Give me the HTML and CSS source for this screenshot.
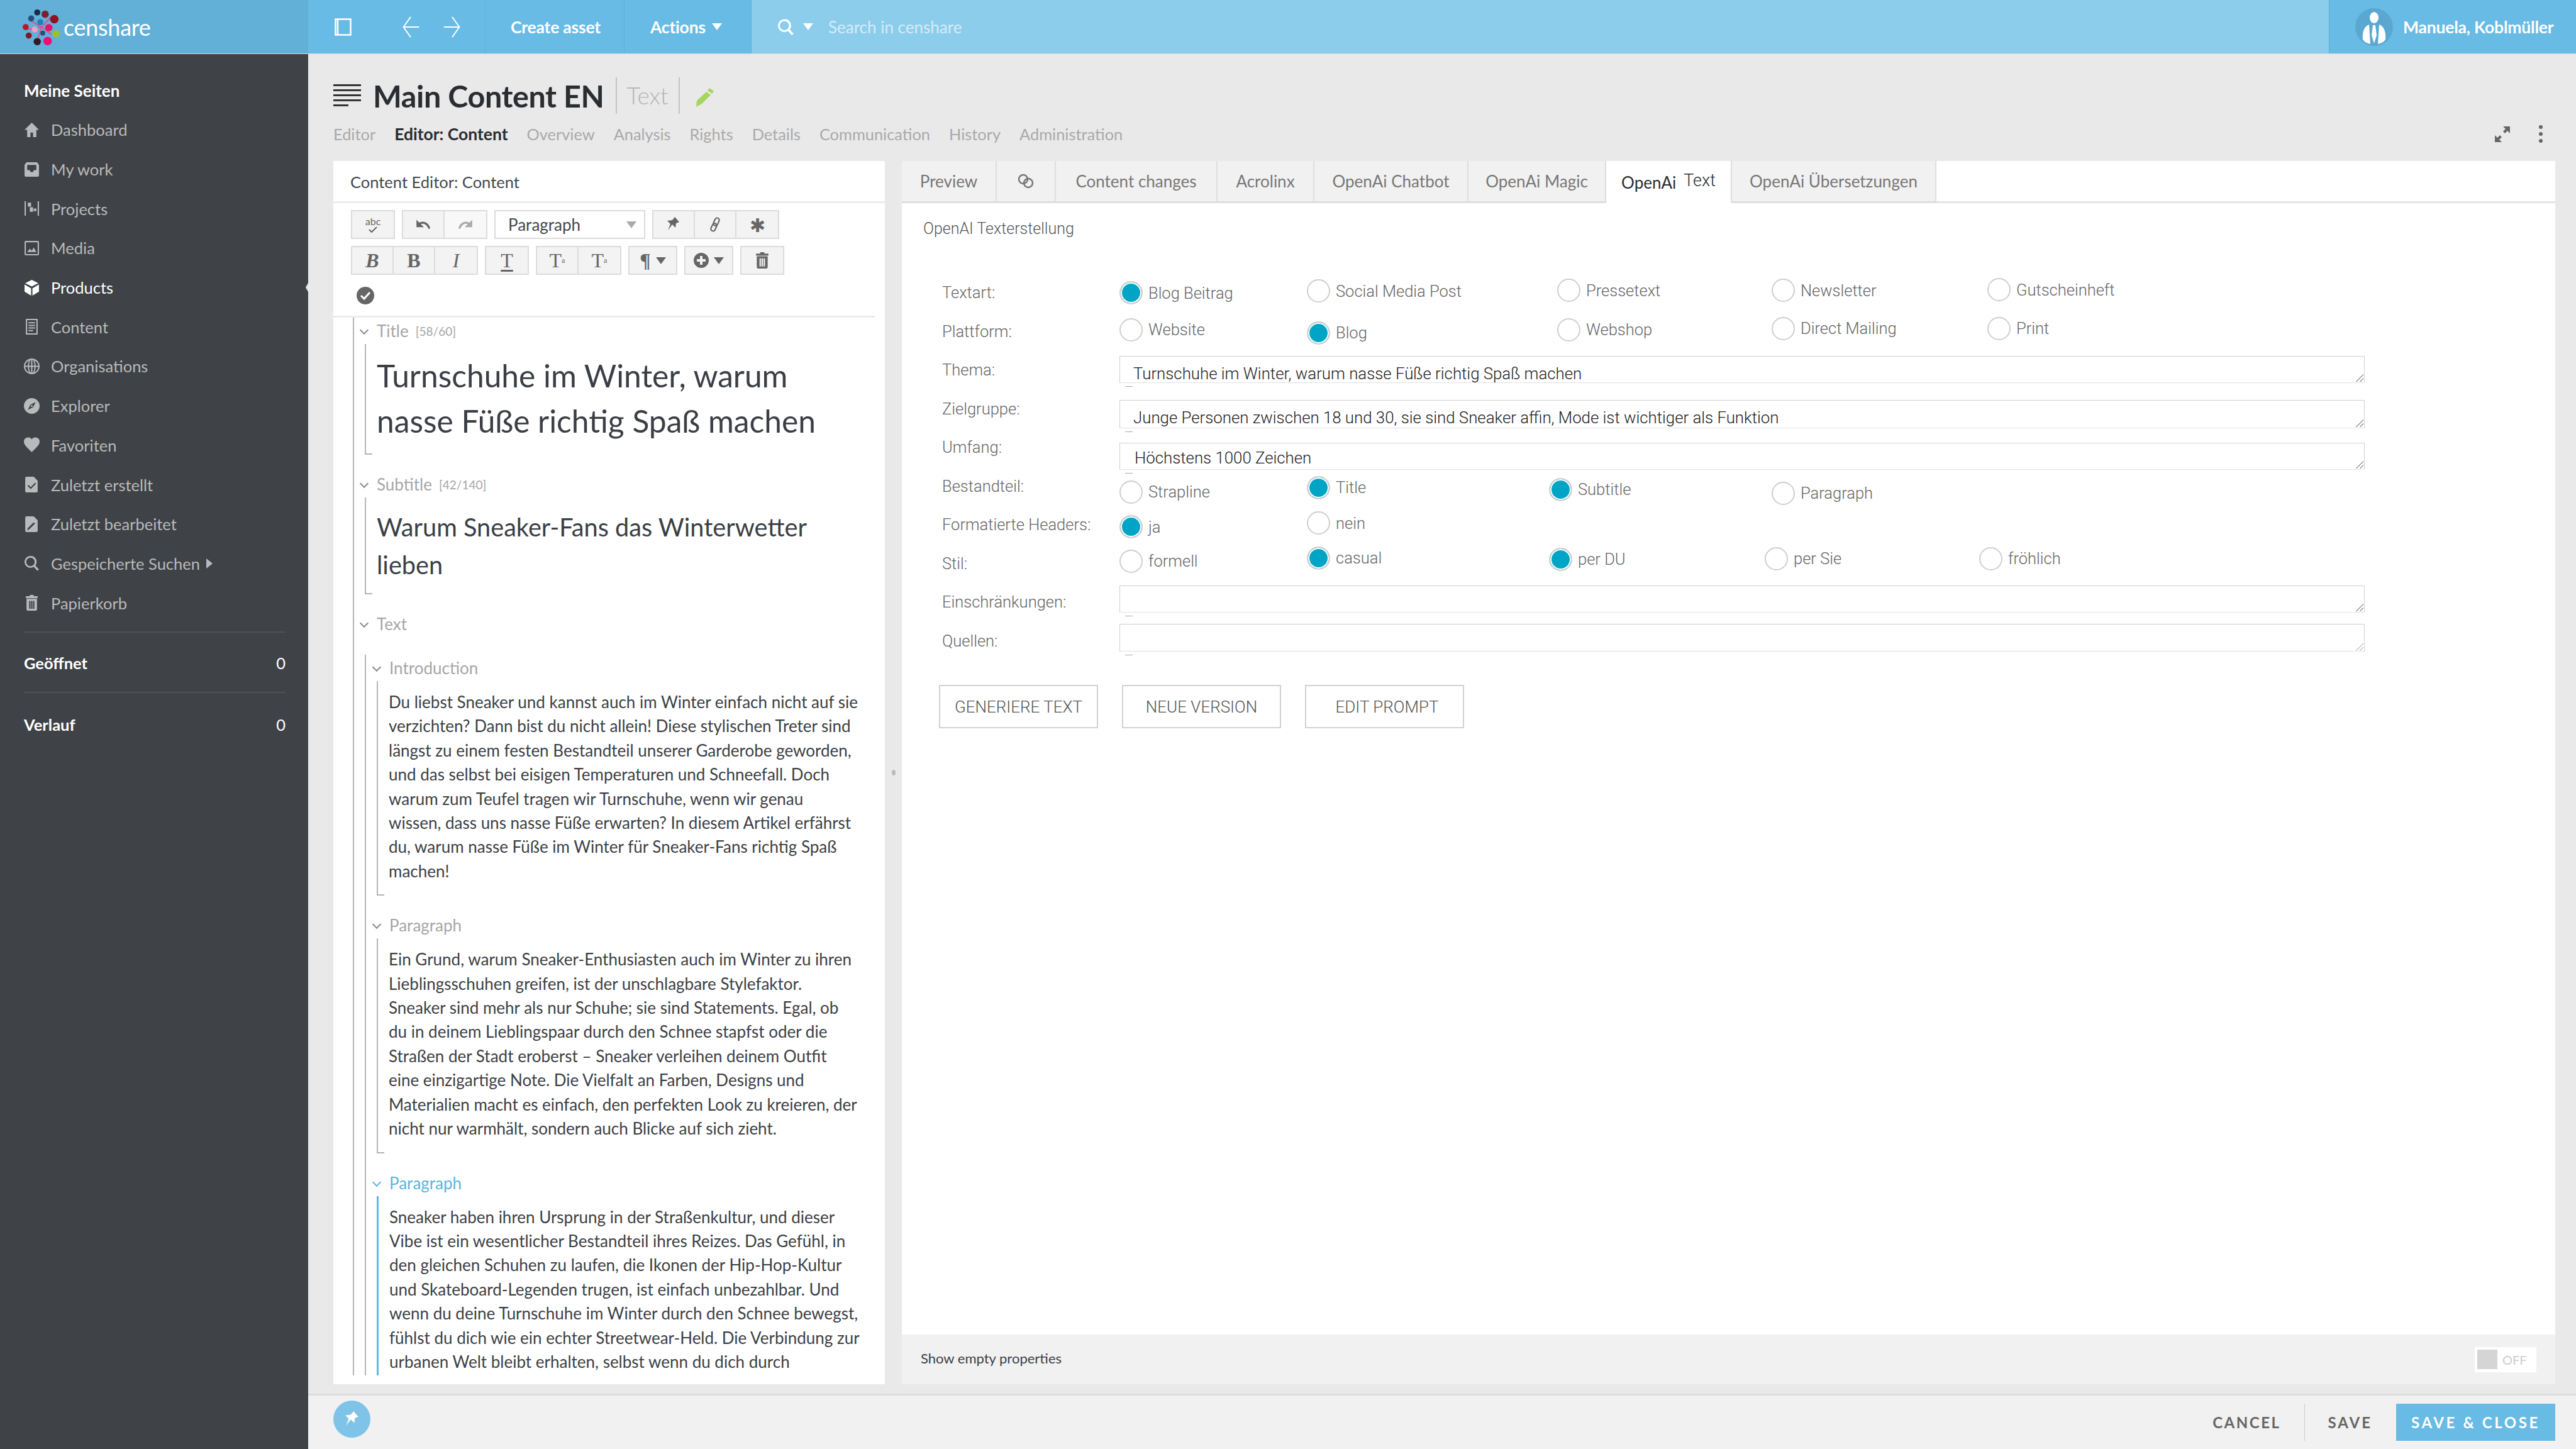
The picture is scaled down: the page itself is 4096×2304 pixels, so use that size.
FILE: index.html
```html
<!DOCTYPE html>
<html lang="en">
<head>
  <meta charset="UTF-8">
  <title>censhare | Main Content EN</title>
  <link rel="stylesheet" href="styles.css">
</head>
<body>
  <svg class="sprites" xmlns="http://www.w3.org/2000/svg">
    <symbol id="i-home" viewBox="0 0 24 24"><path d="M12 1 1 12h4v11h5v-7h4v7h5V12h4z"/></symbol>
    <symbol id="i-inbox" viewBox="0 0 24 24"><path d="M4 1h16l3 4v16a2 2 0 0 1-2 2H3a2 2 0 0 1-2-2V5zm1 4v8h4a3 3 0 0 0 6 0h4V5z" fill-rule="evenodd"/></symbol>
    <symbol id="i-projects" viewBox="0 0 24 24"><path d="M1 1h2v22H1zm20 0h2v22h-2zM6 3h5v6H6zm3 7h5v7H9zm6 2h4v4h-4z"/></symbol>
    <symbol id="i-media" viewBox="0 0 24 24"><path d="M3 1h18a2 2 0 0 1 2 2v18a2 2 0 0 1-2 2H3a2 2 0 0 1-2-2V3a2 2 0 0 1 2-2zm0 2v18h18V3zm2 15 4-5 3 3 3-5 4 7z" fill-rule="evenodd"/></symbol>
    <symbol id="i-cube" viewBox="0 0 24 24"><path d="M12 0 2 5l10 5 10-5zM1 7v11l10 6V13zm22 0-10 6v11l10-6z"/></symbol>
    <symbol id="i-doc" viewBox="0 0 24 24"><path d="M3 0h18v24H3zm2 2v20h14V2zm2 3h10v2H7zm0 4h10v2H7zm0 4h10v2H7zm0 4h7v2H7z" fill-rule="evenodd"/></symbol>
    <symbol id="i-globe" viewBox="0 0 24 24"><path d="M12 0a12 12 0 1 0 0 24 12 12 0 0 0 0-24zM2 11h4c0-3 1-6 2-8a10 10 0 0 0-6 8zm6 0h3V2c-2 1-3 5-3 9zm5 0h3c0-4-1-8-3-9zm5 0h4a10 10 0 0 0-6-8c1 2 2 5 2 8zM2 13a10 10 0 0 0 6 8c-1-2-2-5-2-8zm6 0c0 4 1 8 3 9v-9zm5 0v9c2-1 3-5 3-9zm5 0c0 3-1 6-2 8a10 10 0 0 0 6-8z" fill-rule="evenodd"/></symbol>
    <symbol id="i-compass" viewBox="0 0 24 24"><path d="M12 0a12 12 0 1 0 0 24 12 12 0 0 0 0-24zm6 6-4 8-8 4 4-8zm-6 4.500a1.500 1.500 0 1 0 0 3 1.500 1.500 0 0 0 0-3z" fill-rule="evenodd"/></symbol>
    <symbol id="i-heart" viewBox="0 0 24 24"><path d="M12 23C6 17 0 12 0 7a6.500 6.500 0 0 1 12-3.500A6.500 6.500 0 0 1 24 7c0 5-6 10-12 16z"/></symbol>
    <symbol id="i-doc-check" viewBox="0 0 24 24"><path d="M4 0h11l6 6v16a2 2 0 0 1-2 2H4a2 2 0 0 1-2-2V2a2 2 0 0 1 2-2zm13 9-6.500 7L7 12.500 5.500 14l5 5 8-8.500z" fill-rule="evenodd"/></symbol>
    <symbol id="i-doc-pen" viewBox="0 0 24 24"><path d="M4 0h11l6 6v16a2 2 0 0 1-2 2H4a2 2 0 0 1-2-2V2a2 2 0 0 1 2-2zm11 9L6 18l-1 3 3-1 9-9z" fill-rule="evenodd"/></symbol>
    <symbol id="i-search" viewBox="0 0 24 24"><path d="M10 1a9 9 0 1 0 5 16.500l5.500 6 2.500-2-5.500-6A9 9 0 0 0 10 1zm0 2.500a6.500 6.500 0 1 1 0 13 6.500 6.500 0 0 1 0-13z" fill-rule="evenodd"/></symbol>
    <symbol id="i-trash" viewBox="0 0 24 24"><path d="M9 0h6v2h6v3H3V2h6zM4 6h16v16a2 2 0 0 1-2 2H6a2 2 0 0 1-2-2zm4 3v12h2V9zm3 0v12h2V9zm3 0v12h2V9z" fill-rule="evenodd"/></symbol>
    <symbol id="i-pin" viewBox="0 0 24 24"><path d="M14 0l7 8-5 2-1 7-5-5-7 9 4-10-5-5 8-1z"/></symbol>
  </svg>

  <header class="topbar">
    <div class="brand">
      <svg class="brand-logo" viewBox="0 0 62 60">
        <g fill="none" stroke="#d8528f" stroke-width="2"><path d="M14 20 31 30 46 14M31 30 24 52M31 30 47 42M8 34 31 30"/></g>
        <circle cx="24" cy="6" r="5" fill="#1c2a44"/><circle cx="37" cy="9" r="6" fill="#7d1f2a"/><circle cx="14" cy="16" r="5" fill="#23507e"/>
        <circle cx="52" cy="17" r="7" fill="#8c1420"/><circle cx="29" cy="22" r="5" fill="#1f7fc2"/><circle cx="5" cy="30" r="5" fill="#b5172f"/>
        <circle cx="43" cy="31" r="6" fill="#e0156d"/><circle cx="20" cy="34" r="5" fill="#f0a0c0"/><circle cx="10" cy="44" r="5" fill="#7e1a24"/>
        <circle cx="55" cy="41" r="6" fill="#9cc229"/><circle cx="24" cy="54" r="6" fill="#321a20"/><circle cx="41" cy="53" r="7" fill="#ec0f78"/>
        <circle cx="33" cy="40" r="4" fill="#2a4a7a"/>
      </svg>
      <span class="brand-name">censhare</span>
    </div>
    <div class="bar-group bar-nav">
      <svg class="bar-icon" viewBox="0 0 27 28" fill="none" stroke="#fff" stroke-width="2.500"><rect x="1.500" y="1.500" width="24" height="25"/><path d="M5 1v26"/></svg>
      <svg class="bar-arrow" viewBox="0 0 28 40" fill="none" stroke="#fff" stroke-width="2"><path d="M14 3 2 20l12 17M2 20h26"/></svg>
      <svg class="bar-arrow" viewBox="0 0 28 40" fill="none" stroke="#fff" stroke-width="2"><path d="M14 3l12 17-12 17M26 20H0"/></svg>
    </div>
    <div class="bar-btn bar-create">Create asset</div>
    <div class="bar-btn bar-actions">Actions <span class="caret"></span></div>
    <div class="bar-search">
      <svg class="search-icon"><use href="#i-search"/></svg>
      <span class="caret"></span>
      <span class="search-hint">Search in censhare</span>
    </div>
    <div class="bar-user">
      <svg class="avatar" viewBox="0 0 60 60">
        <circle cx="30" cy="30" r="30" fill="#5aa8d1"/>
        <g fill="#fff"><ellipse cx="30" cy="15" rx="7" ry="9"/><path d="M22 26c-8 3-11 12-10 24 3 4 7 6 12 7zM38 26c8 3 11 12 10 24-3 4-7 6-12 7zM28 27h4l2 16-4 13-4-13z"/></g>
      </svg>
      <span class="user-name">Manuela, Koblmüller</span>
    </div>
  </header>

  <div class="app">
    <aside class="sidebar">
      <div class="side-title">Meine Seiten</div>
      <ul class="side-list">
        <li class="side-item"><svg><use href="#i-home"/></svg>Dashboard</li>
        <li class="side-item"><svg><use href="#i-inbox"/></svg>My work</li>
        <li class="side-item"><svg><use href="#i-projects"/></svg>Projects</li>
        <li class="side-item"><svg><use href="#i-media"/></svg>Media</li>
        <li class="side-item active"><svg><use href="#i-cube"/></svg>Products</li>
        <li class="side-item"><svg><use href="#i-doc"/></svg>Content</li>
        <li class="side-item"><svg><use href="#i-globe"/></svg>Organisations</li>
        <li class="side-item"><svg><use href="#i-compass"/></svg>Explorer</li>
        <li class="side-item"><svg><use href="#i-heart"/></svg>Favoriten</li>
        <li class="side-item"><svg><use href="#i-doc-check"/></svg>Zuletzt erstellt</li>
        <li class="side-item"><svg><use href="#i-doc-pen"/></svg>Zuletzt bearbeitet</li>
        <li class="side-item"><svg><use href="#i-search"/></svg>Gespeicherte Suchen <span class="side-more"></span></li>
        <li class="side-item"><svg><use href="#i-trash"/></svg>Papierkorb</li>
      </ul>
      <div class="side-count first"><b>Geöffnet</b><span>0</span></div>
      <div class="side-count"><b>Verlauf</b><span>0</span></div>
    </aside>

    <main class="main">
      <div class="asset-head">
        <svg class="asset-icon" viewBox="0 0 44 36" fill="#333"><path d="M0 0h44v3H0zm0 8h44v3H0zm0 8h44v3H0zm0 8h44v3H0zm0 8h24v3H0z"/></svg>
        <h1>Main Content EN</h1>
        <span class="asset-type">Text</span>
        <svg class="asset-pen" viewBox="0 0 30 30" fill="#a4d65e"><path d="M23 0l7 5-3 4-7-5zM18 6l7 5L11 25l-9 5 1-10z"/></svg>
      </div>
      <nav class="asset-nav">
        <span>Editor</span>
        <span class="current">Editor: Content</span>
        <span>Overview</span>
        <span>Analysis</span>
        <span>Rights</span>
        <span>Details</span>
        <span>Communication</span>
        <span>History</span>
        <span>Administration</span>
        <svg class="nav-expand" viewBox="0 0 24 25" fill="#666"><path d="M13 0h11v11l-4-4-4 4-3-3 4-4zM0 25V14l4 4 4-4 3 3-4 4 4 4z"/></svg>
        <svg class="nav-dots" viewBox="0 0 6 28" fill="#666"><circle cx="3" cy="3" r="3"/><circle cx="3" cy="14" r="3"/><circle cx="3" cy="25" r="3"/></svg>
      </nav>

      <div class="panels">
        <section class="panel editor">
          <div class="editor-title">Content Editor: Content</div>
          <div class="toolbar">
            <div class="tool-row">
              <div class="tools"><span class="tool spell">abc<svg viewBox="0 0 16 10" fill="none" stroke="#666" stroke-width="2"><path d="M2 5l4 4 8-8"/></svg></span></div>
              <div class="tools">
                <span class="tool"><svg viewBox="0 0 24 20" fill="none" stroke="#666" stroke-width="3"><path d="M4 13C7 5 17 5 21 16"/><path d="M2 3v11h11" stroke-width="0" fill="#666"/></svg></span>
                <span class="tool off"><svg viewBox="0 0 24 20" fill="none" stroke="#aaa" stroke-width="3"><path d="M20 13C17 5 7 5 3 16"/><path d="M22 3v11H11" stroke-width="0" fill="#aaa"/></svg></span>
              </div>
              <div class="tool-select">Paragraph<span class="caret grey"></span></div>
              <div class="tools">
                <span class="tool"><svg class="pin"><use href="#i-pin"/></svg></span>
                <span class="tool"><svg viewBox="0 0 26 28" fill="none" stroke="#666" stroke-width="2.500"><g transform="rotate(25 13 14)"><rect x="9" y="1" width="8" height="15" rx="4"/><rect x="9" y="12" width="8" height="15" rx="4"/></g></svg></span>
                <span class="tool star">✱</span>
              </div>
            </div>
            <div class="tool-row">
              <div class="tools">
                <span class="tool serif bold-italic">B</span>
                <span class="tool serif bold">B</span>
                <span class="tool serif italic">I</span>
              </div>
              <div class="tools"><span class="tool serif under">T</span></div>
              <div class="tools">
                <span class="tool serif">T<sub>a</sub></span>
                <span class="tool serif">T<sup>a</sup></span>
              </div>
              <div class="tools"><span class="tool wide serif bold">¶<span class="caret dark"></span></span></div>
              <div class="tools"><span class="tool wide"><svg class="plus" viewBox="0 0 24 24" fill="#666"><path d="M12 0a12 12 0 1 0 0 24 12 12 0 0 0 0-24zm-2 5h4v5h5v4h-5v5h-4v-5H5v-4h5z" fill-rule="evenodd"/></svg><span class="caret dark"></span></span></div>
              <div class="tools"><span class="tool"><svg class="trash"><use href="#i-trash"/></svg></span></div>
            </div>
            <div class="tool-status">
              <svg viewBox="0 0 28 28"><circle cx="14" cy="14" r="14" fill="#666"/><path d="M7 14l5 5 9-10" fill="none" stroke="#fff" stroke-width="3"/></svg>
            </div>
          </div>

          <div class="tree">
            <div class="node">
              <div class="node-label"><span class="chev"></span>Title <small>[58/60]</small></div>
              <div class="node-body pad title-text">Turnschuhe im Winter, warum<br>nasse Füße richtig Spaß machen</div>
            </div>
            <div class="node gap">
              <div class="node-label"><span class="chev"></span>Subtitle <small>[42/140]</small></div>
              <div class="node-body pad subtitle-text">Warum Sneaker-Fans das Winterwetter<br>lieben</div>
            </div>
            <div class="node gap">
              <div class="node-label"><span class="chev"></span>Text</div>
              <div class="node-body open">
                <div class="node sub first">
                  <div class="node-label"><span class="chev"></span>Introduction</div>
                  <div class="node-body pad para">Du liebst Sneaker und kannst auch im Winter einfach nicht auf sie<br>verzichten? Dann bist du nicht allein! Diese stylischen Treter sind<br>längst zu einem festen Bestandteil unserer Garderobe geworden,<br>und das selbst bei eisigen Temperaturen und Schneefall. Doch<br>warum zum Teufel tragen wir Turnschuhe, wenn wir genau<br>wissen, dass uns nasse Füße erwarten? In diesem Artikel erfährst<br>du, warum nasse Füße im Winter für Sneaker-Fans richtig Spaß<br>machen!</div>
                </div>
                <div class="node sub">
                  <div class="node-label"><span class="chev"></span>Paragraph</div>
                  <div class="node-body pad para">Ein Grund, warum Sneaker-Enthusiasten auch im Winter zu ihren<br>Lieblingsschuhen greifen, ist der unschlagbare Stylefaktor.<br>Sneaker sind mehr als nur Schuhe; sie sind Statements. Egal, ob<br>du in deinem Lieblingspaar durch den Schnee stapfst oder die<br>Straßen der Stadt eroberst – Sneaker verleihen deinem Outfit<br>eine einzigartige Note. Die Vielfalt an Farben, Designs und<br>Materialien macht es einfach, den perfekten Look zu kreieren, der<br>nicht nur warmhält, sondern auch Blicke auf sich zieht.</div>
                </div>
                <div class="node sub focus">
                  <div class="node-label"><span class="chev"></span>Paragraph</div>
                  <div class="node-body pad para">Sneaker haben ihren Ursprung in der Straßenkultur, und dieser<br>Vibe ist ein wesentlicher Bestandteil ihres Reizes. Das Gefühl, in<br>den gleichen Schuhen zu laufen, die Ikonen der Hip-Hop-Kultur<br>und Skateboard-Legenden trugen, ist einfach unbezahlbar. Und<br>wenn du deine Turnschuhe im Winter durch den Schnee bewegst,<br>fühlst du dich wie ein echter Streetwear-Held. Die Verbindung zur<br>urbanen Welt bleibt erhalten, selbst wenn du dich durch</div>
                </div>
              </div>
            </div>
          </div>
        </section>

        <div class="splitter"><span></span></div>

        <section class="panel detail">
          <div class="tabs">
            <span class="tab t-preview">Preview</span>
            <span class="tab t-link"><svg viewBox="0 0 26 24" fill="none" stroke="#777" stroke-width="2.500"><circle cx="9" cy="9" r="7"/><circle cx="17" cy="15" r="7"/></svg></span>
            <span class="tab t-changes">Content changes</span>
            <span class="tab t-acro">Acrolinx</span>
            <span class="tab t-chat">OpenAi Chatbot</span>
            <span class="tab t-magic">OpenAi Magic</span>
            <span class="tab t-text active">OpenAi <em>Text</em></span>
            <span class="tab t-trans">OpenAi Übersetzungen</span>
          </div>
          <div class="detail-body">
            <h2 class="form-title">OpenAI Texterstellung</h2>
            <div class="form">
              <div class="form-row">
                <label class="form-label">Textart:</label>
                <span class="radio on">Blog Beitrag</span>
                <span class="radio up3">Social Media Post</span>
                <span class="radio up4">Pressetext</span>
                <span class="radio up4">Newsletter</span>
                <span class="radio up5">Gutscheinheft</span>
              </div>
              <div class="form-row">
                <label class="form-label">Plattform:</label>
                <span class="radio up3">Website</span>
                <span class="radio on dn2">Blog</span>
                <span class="radio up3">Webshop</span>
                <span class="radio up5">Direct Mailing</span>
                <span class="radio up5">Print</span>
              </div>
              <div class="form-row">
                <label class="form-label">Thema:</label>
                <div class="field f-thema">Turnschuhe im Winter, warum nasse Füße richtig Spaß machen</div>
              </div>
              <div class="form-row">
                <label class="form-label">Zielgruppe:</label>
                <div class="field f-ziel">Junge Personen zwischen 18 und 30, sie sind Sneaker affin, Mode ist wichtiger als Funktion</div>
              </div>
              <div class="form-row">
                <label class="form-label">Umfang:</label>
                <div class="field f-umfang">Höchstens 1000 Zeichen</div>
              </div>
              <div class="form-row">
                <label class="form-label">Bestandteil:</label>
                <span class="radio dn9">Strapline</span>
                <span class="radio on dn2">Title</span>
                <span class="radio on dn5 left13">Subtitle</span>
                <span class="radio dn11">Paragraph</span>
              </div>
              <div class="form-row">
                <label class="form-label">Formatierte Headers:</label>
                <span class="radio on dn3">ja</span>
                <span class="radio up3">nein</span>
              </div>
              <div class="form-row">
                <label class="form-label">Stil:</label>
                <span class="radio up4">formell</span>
                <span class="radio on up9">casual</span>
                <span class="radio on up7 left13">per DU</span>
                <span class="radio up8 left11">per Sie</span>
                <span class="radio up8 left13">fröhlich</span>
              </div>
              <div class="form-row">
                <label class="form-label">Einschränkungen:</label>
                <div class="field f-ein"></div>
              </div>
              <div class="form-row">
                <label class="form-label">Quellen:</label>
                <div class="field f-quellen"></div>
              </div>
            </div>
            <div class="form-actions">
              <button class="form-btn">Generiere Text</button>
              <button class="form-btn">Neue Version</button>
              <button class="form-btn btn-prompt">Edit Prompt</button>
            </div>
          </div>
          <div class="detail-foot">
            <span class="foot-label">Show empty properties</span>
            <span class="toggle"><i></i>OFF</span>
          </div>
        </section>
      </div>

      <footer class="actions">
        <span class="pin-btn"><svg><use href="#i-pin"/></svg></span>
        <span class="act act-cancel">Cancel</span>
        <span class="act act-save">Save</span>
        <span class="act act-close">Save &amp; Close</span>
      </footer>
    </main>
  </div>
</body>
</html>
```

FILE: styles.css
```css
* {
  box-sizing: border-box;
}

html, body {
  margin: 0;
  height: 2304px;
  overflow: hidden;
}

body {
  width: 4096px;
  font-family: "Lato", "Noto Sans", sans-serif;
  background: #e9e9e9;
  color: #44484d;
}

.sprites {
  display: none;
}

.caret {
  display: inline-block;
  width: 0;
  height: 0;
  border-left: 8px solid transparent;
  border-right: 8px solid transparent;
  border-top: 11px solid #fff;
}

/* top bar */
.topbar {
  display: flex;
  height: 86px;
  color: #fff;
  background: #68bbe4;
  border-bottom: 1px solid #d9d9d9;
}

.brand {
  display: flex;
  align-items: center;
  width: 490px;
  padding-left: 36px;
  background: #62afd8;
}

.brand-logo {
  width: 60px;
  height: 60px;
}

.brand-name {
  margin-left: 5px;
  font-size: 36px;
  letter-spacing: -0.3px;
}

.bar-group,
.bar-btn {
  display: flex;
  align-items: center;
}

.bar-nav {
  width: 282px;
  padding-left: 42px;
  border-right: 1px solid #5fb0da;
}

.bar-icon {
  width: 27px;
  height: 28px;
  margin-right: 80px;
}

.bar-arrow {
  width: 28px;
  height: 38px;
  margin-right: 38px;
}

.bar-btn {
  font-size: 26.5px;
  font-weight: 700;
  letter-spacing: -0.2px;
}

.bar-create {
  width: 221px;
  padding-left: 40px;
  border-right: 1px solid #5fb0da;
}

.bar-actions {
  width: 202px;
  padding-left: 41px;
  border-right: 1px solid #5fb0da;
}

.bar-actions .caret {
  margin-left: 10px;
}

.bar-search {
  display: flex;
  align-items: center;
  width: 2508px;
  padding-left: 41px;
  background: #8ccdec;
}

.search-icon {
  width: 27px;
  height: 30px;
  fill: #fff;
  margin-right: 14px;
}

.search-hint {
  margin-left: 24px;
  font-size: 26px;
  color: rgba(255, 255, 255, 0.65);
}

.bar-user {
  display: flex;
  align-items: center;
  flex: 1;
  padding-left: 41px;
  border-left: 1px solid #5fb0da;
}

.avatar {
  width: 60px;
  height: 60px;
}

.user-name {
  margin-left: 16px;
  font-size: 26.5px;
  font-weight: 700;
  letter-spacing: -0.2px;
  white-space: nowrap;
}

/* sidebar */
.app {
  display: flex;
  height: 2218px;
}

.sidebar {
  width: 490px;
  padding: 27px 36px 0 38px;
  background: #3f4246;
  color: #b9babc;
}

.side-title {
  height: 62px;
  line-height: 62px;
  font-size: 26px;
  font-weight: 700;
  color: #fff;
}

.side-list {
  list-style: none;
  margin: 0;
  padding: 0;
}

.side-item {
  position: relative;
  display: flex;
  align-items: center;
  height: 62.7px;
  font-size: 25.5px;
}

.side-item svg {
  width: 25px;
  height: 25px;
  margin-right: 18px;
  fill: #b9babc;
}

.side-item.active {
  color: #fff;
}

.side-item.active svg {
  fill: #fff;
}

.side-item.active::after {
  content: "";
  position: absolute;
  right: -36px;
  top: 24px;
  border-right: 4px solid #e9e9e9;
  border-top: 7px solid transparent;
  border-bottom: 7px solid transparent;
}

.side-more {
  margin-left: 10px;
  border-left: 10px solid #b9babc;
  border-top: 8px solid transparent;
  border-bottom: 8px solid transparent;
}

.side-count {
  display: flex;
  justify-content: space-between;
  align-items: center;
  height: 98px;
  padding-top: 3px;
  font-size: 25.5px;
  color: #fff;
}

.side-count.first {
  margin-top: 14px;
  border-top: 2px solid #4d5054;
  border-bottom: 2px solid #4d5054;
}

/* main column */
.main {
  display: flex;
  flex-direction: column;
  flex: 1;
  padding-left: 40px;
}

.asset-head {
  display: flex;
  align-items: center;
  height: 66px;
  margin-top: 33px;
}

.asset-icon {
  width: 44px;
  height: 36px;
  margin-right: 19px;
}

h1 {
  margin: 0;
  padding-right: 18px;
  font-size: 48.5px;
  font-weight: 700;
  letter-spacing: -0.4px;
  color: #2a2d31;
  border-right: 2px solid #c4c4c4;
  line-height: 58px;
}

.asset-type {
  padding: 6px 16px 0;
  height: 58px;
  font-size: 37px;
  font-weight: 300;
  color: #b4b4b4;
  border-right: 2px solid #c4c4c4;
}

.asset-pen {
  width: 30px;
  height: 30px;
  margin: 6px 0 0 24px;
}

.asset-nav {
  display: flex;
  align-items: center;
  gap: 30px;
  height: 46px;
  margin-top: 5px;
  margin-right: 33px;
  font-size: 25.4px;
  color: #a9a9a9;
}

.asset-nav .current {
  font-size: 26.5px;
  font-weight: 700;
  color: #2a2d31;
}

.nav-expand {
  width: 24px;
  height: 25px;
  margin-left: auto;
}

.nav-dots {
  width: 6px;
  height: 28px;
  margin: 0 20px 0 16px;
}

.panels {
  display: flex;
  height: 1945px;
  margin-top: 20px;
  margin-right: 33px;
}

.panel {
  background: #fff;
}

/* content editor */
.editor {
  display: flex;
  flex-direction: column;
  width: 877px;
}

.editor-title {
  height: 67px;
  padding-left: 27px;
  line-height: 66px;
  font-size: 25.5px;
  color: #44484d;
  border-bottom: 3px solid #ececec;
}

.toolbar {
  height: 182px;
  padding: 11px 0 0 28px;
  margin-right: 16px;
  border-bottom: 3px solid #ececec;
}

.tool-row {
  display: flex;
  gap: 11px;
  margin-bottom: 11px;
}

.tools {
  display: flex;
  border: 2px solid #dcdcdc;
  background: #f3f3f3;
}

.tool {
  display: flex;
  align-items: center;
  justify-content: center;
  width: 66px;
  height: 42px;
  color: #666;
  border-right: 2px solid #dcdcdc;
}

.tool:last-child {
  border-right: 0;
}

.tool svg {
  width: 26px;
  height: 24px;
}

.tool.off {
  background: #f8f8f8;
}

.tool svg.pin {
  fill: #666;
}

.tool.spell {
  flex-direction: column;
  font-size: 16px;
  line-height: 16px;
}

.tool.spell svg {
  width: 16px;
  height: 10px;
}

.tool.star {
  font-size: 30px;
}

.tool.serif {
  font-family: "Liberation Serif", serif;
  font-size: 32px;
}

.tool.serif sub,
.tool.serif sup {
  font-size: 12px;
}

.tool.bold-italic {
  font-weight: 700;
  font-style: italic;
}

.tool.bold {
  font-weight: 700;
}

.tool.italic {
  font-style: italic;
}

.tool.under {
  text-decoration: underline;
  text-underline-offset: 4px;
}

.tool.wide {
  width: 74px;
}

.tool .caret {
  margin-left: 8px;
}

.caret.dark {
  border-top-color: #666;
}

.caret.grey {
  border-top-color: #aaa;
}

.tool svg.plus {
  width: 24px;
}

.tool svg.trash {
  fill: #666;
  height: 28px;
}

.tool-select {
  display: flex;
  align-items: center;
  justify-content: space-between;
  width: 240px;
  padding: 0 12px 0 20px;
  font-size: 26px;
  border: 2px solid #dcdcdc;
}

.tool-status svg {
  display: block;
  width: 28px;
  height: 28px;
  margin: 19px 0 0 9px;
}

.tree {
  flex: 1;
  margin: 0 40px 14px 31px;
  overflow: hidden;
  border-left: 2px solid #b5b5b5;
}

.node-label {
  display: flex;
  align-items: center;
  gap: 8px;
  height: 42px;
  padding-left: 36px;
  font-size: 26px;
  color: #a6a6a6;
  position: relative;
}

.node-label small {
  font-size: 19px;
  margin-left: 3px;
}

.chev {
  position: absolute;
  left: 11px;
  top: 15px;
  width: 10px;
  height: 10px;
  border-right: 2px solid #888;
  border-bottom: 2px solid #888;
  transform: rotate(45deg);
}

.node-body {
  position: relative;
  margin-left: 17px;
  border-left: 2px solid #b5b5b5;
}

.node-body.pad {
  padding: 14px 0 18px 17px;
}

.node-body.pad::after {
  content: "";
  position: absolute;
  left: 0;
  bottom: 0;
  width: 10px;
  border-bottom: 2px solid #b5b5b5;
}

.node.gap {
  margin-top: 26px;
}

.title-text {
  font-size: 49.7px;
  line-height: 72px;
  color: #3b3f45;
}

.node-body.subtitle-text {
  padding-top: 17px;
  padding-bottom: 17px;
  font-size: 39.7px;
  line-height: 60px;
  color: #3b3f45;
}

.node.sub {
  margin-top: 26px;
}

.node.sub.first {
  margin-top: 28px;
}

.sub .node-label {
  padding-left: 37px;
}

.sub .chev {
  left: 12px;
}

.node-body.para {
  padding-bottom: 20px;
  font-size: 26px;
  line-height: 38.4px;
  color: #3c3f44;
  white-space: nowrap;
}

.focus .node-label {
  color: #5cb4e0;
}

.focus .chev {
  border-color: #5cb4e0;
}

.focus .node-body {
  border-left: 3px solid #5db8e6;
}

.focus .node-body.pad::after {
  display: none;
}

.splitter {
  display: flex;
  align-items: center;
  justify-content: center;
  width: 27px;
}

.splitter span {
  width: 6px;
  height: 9px;
  border-radius: 50%;
  background: #bbb;
}

/* right panel */
.detail {
  display: flex;
  flex-direction: column;
  flex: 1;
  font-family: "Roboto", sans-serif;
  font-weight: 300;
  color: #666;
}

.tabs {
  display: flex;
  height: 67px;
  font-family: "Lato", sans-serif;
  font-size: 26px;
  font-weight: 400;
  color: #777;
  border-bottom: 3px solid #e4e4e4;
}

.tab {
  display: flex;
  align-items: center;
  justify-content: center;
  height: 67px;
  background: #f1f1f1;
  border-right: 2px solid #dedede;
  border-bottom: 3px solid #dedede;
}

.tab svg {
  width: 26px;
  height: 24px;
}

.t-preview { width: 151px; }
.t-link { width: 94px; }
.t-changes { width: 257px; }
.t-acro { width: 154px; }
.t-chat { width: 245px; }
.t-magic { width: 219px; }
.t-text { width: 200px; }
.t-trans { width: 325px; }

.tab.active {
  gap: 12px;
  background: #fff;
  color: #2a2d31;
  border-bottom: 0;
}

.tab.active em {
  font-family: "Roboto", sans-serif;
  font-size: 27px;
  font-style: normal;
  font-weight: 300;
  margin-bottom: 5px;
}

.detail-body {
  flex: 1;
  padding: 0 0 0 34px;
}

.form-title {
  margin: 25px 0 0;
  height: 32px;
  font-size: 25px;
  line-height: 32px;
  font-weight: 300;
  color: #555;
}

.form {
  margin-top: 55px;
  margin-left: 30px;
}

.form-row {
  display: grid;
  grid-template-columns: 282px 298px 398px 341px 343px 300px;
  height: 61.5px;
  align-items: start;
}

.form-label {
  line-height: 61.5px;
  font-size: 25.5px;
  color: #666;
  white-space: nowrap;
}

.radio {
  display: flex;
  align-items: center;
  gap: 9px;
  height: 33px;
  margin-top: 14px;
  font-size: 25.5px;
  white-space: nowrap;
}

.radio::before {
  content: "";
  flex: none;
  width: 33px;
  height: 33px;
  border-radius: 50%;
  border: 2px solid #cfcfcf;
  background: #fff;
}

.radio.on::before {
  background: #00a5c6;
  box-shadow: inset 0 0 0 2px #fff;
}

.radio.up3 { margin-top: 11px; }
.radio.up4 { margin-top: 10px; }
.radio.up5 { margin-top: 9px; }
.radio.up7 { margin-top: 7px; }
.radio.up8 { margin-top: 6px; }
.radio.up9 { margin-top: 5px; }
.radio.dn2 { margin-top: 16px; }
.radio.dn3 { margin-top: 17px; }
.radio.dn5 { margin-top: 19px; }
.radio.dn9 { margin-top: 23px; }
.radio.dn11 { margin-top: 25px; }
.radio.left11 { margin-left: -11px; }
.radio.left13 { margin-left: -13px; }

.field {
  position: relative;
  grid-column: 2 / -1;
  width: 1980px;
  height: 43px;
  padding: 10px 0 0 21px;
  font-size: 25.8px;
  line-height: 34px;
  color: #222;
  border: 1px solid #d0d0d0;
  border-bottom-color: #e2e2e2;
  background: #fff;
}

.field::before {
  content: "";
  position: absolute;
  left: 8px;
  bottom: -7px;
  width: 12px;
  border-top: 1px solid #aaa;
}

.field::after {
  content: "";
  position: absolute;
  right: 1px;
  bottom: 1px;
  width: 12px;
  height: 12px;
  background: linear-gradient(135deg, transparent 50%, #999 50%, #999 58%, transparent 58%, transparent 75%, #999 75%, #999 83%, transparent 83%);
}

.f-thema { margin-top: 8px; }
.f-ziel { margin-top: 16px; height: 45px; }
.f-umfang { margin-top: 23px; padding-top: 6px; padding-left: 23px; }
.f-ein { margin-top: 4px; }
.f-quellen { margin-top: 3px; height: 44px; }

.form-actions {
  display: flex;
  gap: 38px;
  margin: 39px 0 0 25px;
}

.form-btn {
  width: 253px;
  height: 69px;
  padding: 0;
  font-family: "Roboto", sans-serif;
  font-size: 26px;
  font-weight: 300;
  text-transform: uppercase;
  color: #555;
  background: #fff;
  border: 2px solid #d2d2d2;
}

.btn-prompt {
  padding-left: 8px;
}

.detail-foot {
  display: flex;
  align-items: center;
  justify-content: space-between;
  height: 79px;
  padding: 0 30px;
  background: #f1f1f1;
  font-family: "Lato", sans-serif;
  font-size: 22px;
  font-weight: 400;
  color: #3b3f45;
}

.foot-label {
  margin-bottom: 4px;
}

.toggle {
  display: flex;
  align-items: center;
  gap: 8px;
  width: 98px;
  height: 40px;
  padding-left: 4px;
  background: #fff;
  color: #ccc;
  font-size: 20px;
}

.toggle i {
  width: 32px;
  height: 31px;
  background: #d5d5d5;
}

/* footer */
.actions {
  display: flex;
  align-items: center;
  height: 88px;
  margin: 15px 0 0 -40px;
  padding: 0 33px 0 40px;
  background: #f1f1f1;
  border-top: 3px solid #dcdcdc;
}

.pin-btn {
  display: flex;
  align-items: center;
  justify-content: center;
  width: 59px;
  height: 59px;
  margin: 0 auto 10px 0;
  border-radius: 50%;
  background: #7fc4e8;
}

.pin-btn svg {
  width: 26px;
  height: 26px;
  fill: #fff;
}

.act {
  font-size: 24px;
  font-weight: 700;
  letter-spacing: 3px;
  text-transform: uppercase;
  color: #666;
}

.act-cancel {
  padding-right: 38px;
  letter-spacing: 2.5px;
}

.act-save {
  height: 59px;
  line-height: 59px;
  padding: 0 38px 0 36px;
  border-left: 1px solid #ccc;
}

.act-close {
  width: 253px;
  height: 59px;
  line-height: 59px;
  text-align: center;
  letter-spacing: 3.6px;
  color: #fff;
  background: #68bbe4;
}
```
